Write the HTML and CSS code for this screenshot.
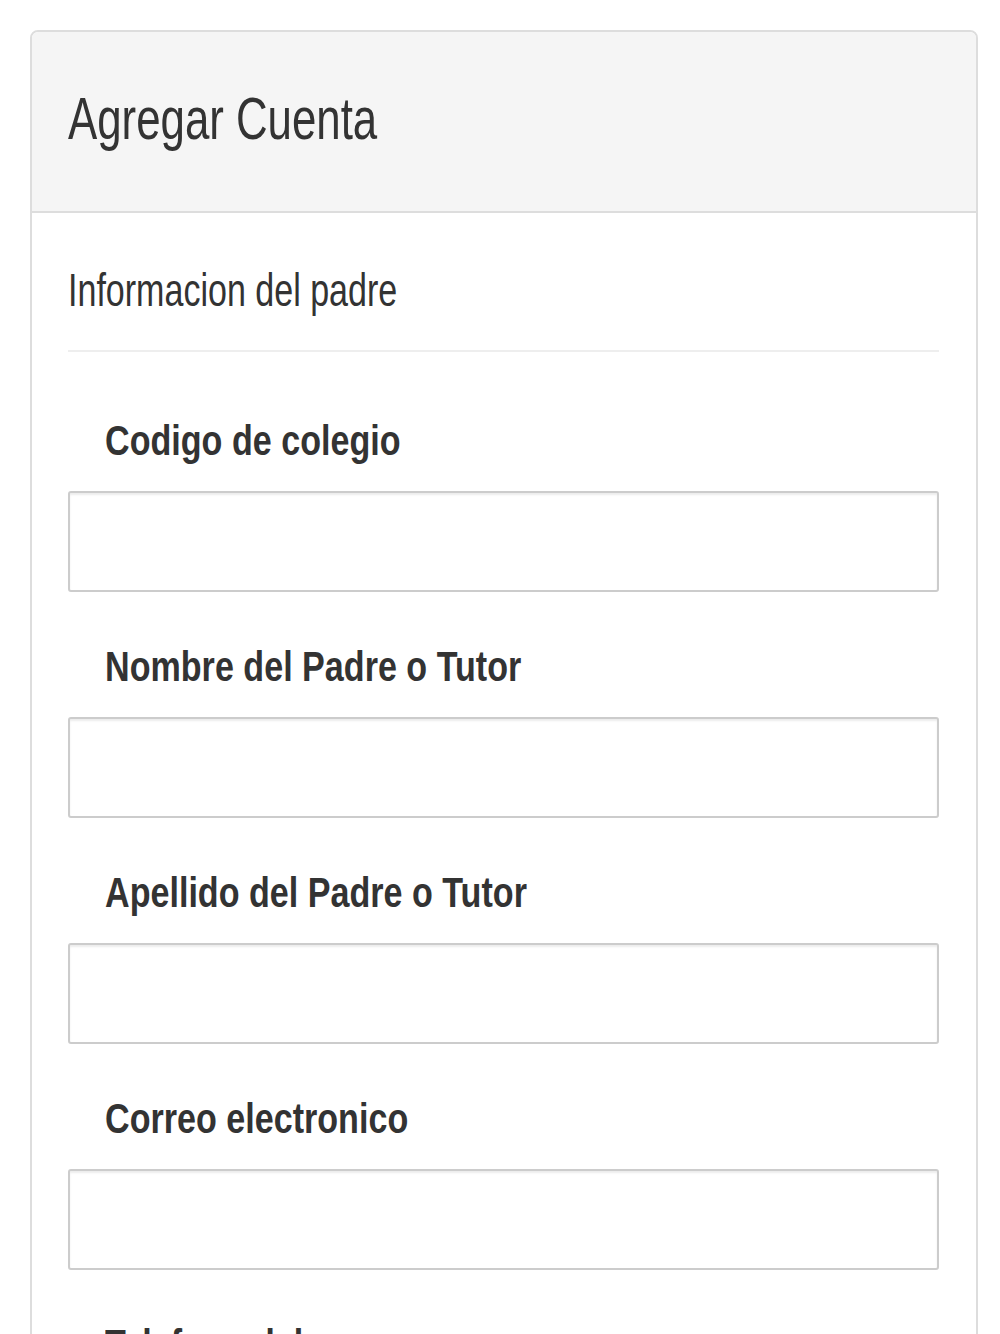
FILE: index.html
```html
<html>

<head>
    <link rel="stylesheet" href="styles.css">
</head>

<body>
    <div class="panel">
        <div class="panel-heading">
            <h3 class="panel-title"><span>Agregar Cuenta</span></h3>
        </div>
        <div class="panel-body">
            <div class="legend"><span>Informacion del padre</span></div>
            <div class="form-group">
                <label><span>Codigo de colegio</span></label>
                <input type="text" class="form-control">
            </div>
            <div class="form-group">
                <label><span>Nombre del Padre o Tutor</span></label>
                <input type="text" class="form-control">
            </div>
            <div class="form-group">
                <label><span>Apellido del Padre o Tutor</span></label>
                <input type="text" class="form-control">
            </div>
            <div class="form-group">
                <label><span>Correo electronico</span></label>
                <input type="email" class="form-control">
            </div>
            <div class="form-group">
                <label><span>Telefono del</span></label>
                <input type="text" class="form-control">
            </div>
        </div>
    </div>
</body>

</html>
```

FILE: styles.css
```css
body {
    margin: 0;
    padding: 30px 22px 0 30px;
    font-family: "Liberation Sans", Arial, sans-serif;
    color: #333;
    background: #fff;
}

.panel {
    border: 2px solid #dddddd;
    border-radius: 8px;
    background: #fff;
}

.panel-heading {
    background-color: #f5f5f5;
    border-bottom: 2px solid #dddddd;
    border-radius: 6px 6px 0 0;
    padding: 54px 36px 59px;
}

.panel-title {
    margin: 0;
    font-size: 60px;
    font-weight: normal;
    line-height: 66px;
}

.panel-title span,
.legend span,
label span {
    display: inline-block;
    transform-origin: left center;
}

.panel-title span {
    transform: scaleX(0.73);
}

.panel-body {
    padding: 52px 37px 40px 36px;
}

.legend {
    font-size: 46px;
    line-height: 50px;
    padding-bottom: 35px;
    border-bottom: 2px solid #eeeeee;
    margin-bottom: 66px;
}

.legend span {
    transform: scaleX(0.74);
}

.form-group {
    display: flex;
    flex-direction: column;
    gap: 27px;
    margin-bottom: 52px;
}

label {
    display: block;
    padding-left: 37px;
    font-size: 42px;
    font-weight: bold;
    line-height: 46px;
}

label span {
    transform: scaleX(0.812);
}

.form-control {
    display: block;
    width: 100%;
    height: 101px;
    box-sizing: border-box;
    margin: 0;
    border: 2px solid #cccccc;
    border-radius: 3px;
    box-shadow: inset 0 2px 2px rgba(0, 0, 0, 0.075);
    background: #fff;
    font-size: 40px;
}
```
